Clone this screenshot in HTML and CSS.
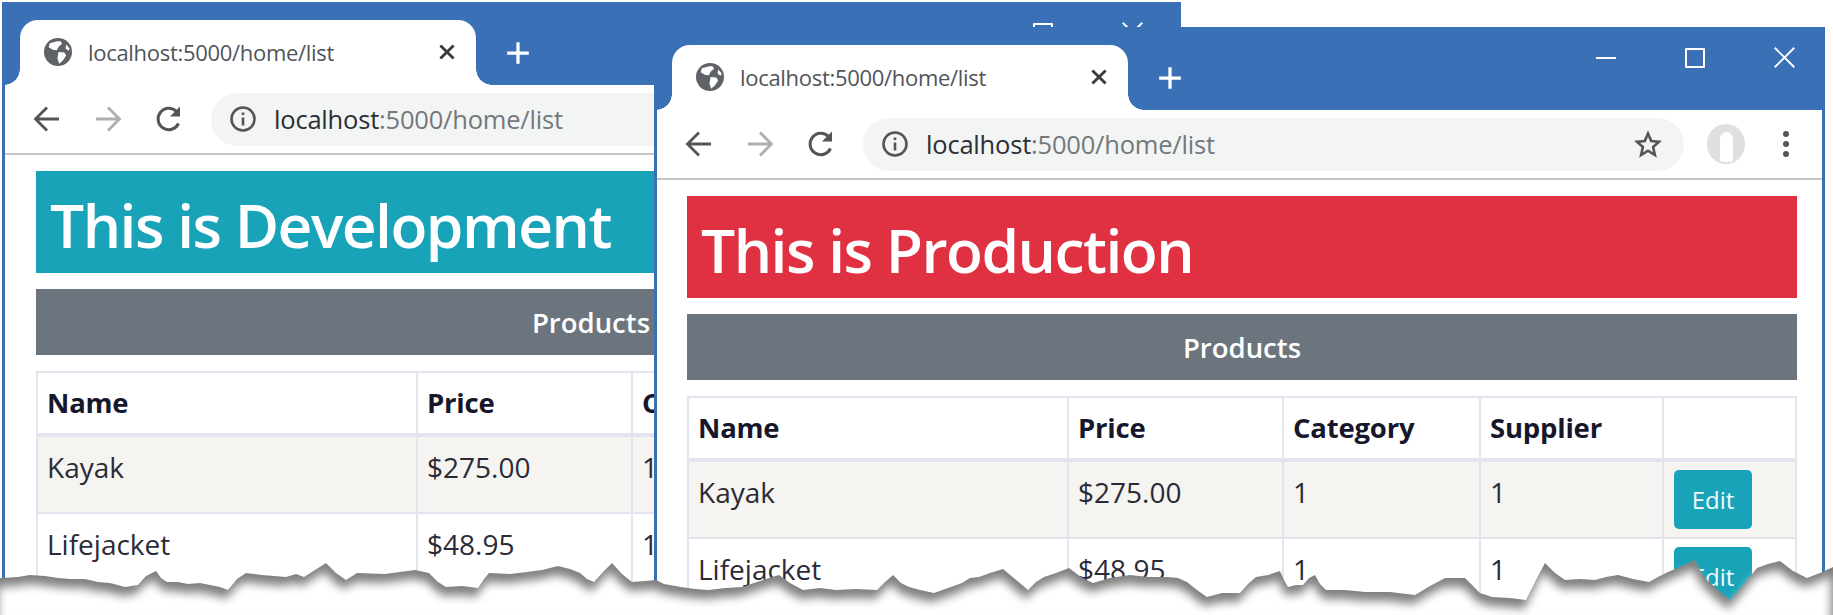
FILE: index.html
```html
<!DOCTYPE html>
<html lang="en">
  <head>
    <meta charset="UTF-8" />
    <title>This is Development / This is Production</title>
    <link rel="stylesheet" href="styles.css">
  </head>
  <body>
    <svg class="defs" width="0" height="0">
      <symbol id="i-globe" viewBox="0 0 24 24">
        <circle cx="12" cy="12" r="12" fill="#5f6368"/>
        <path d="M5 4.5 10.5 3 14 2.5 15.5 5 12.5 7.5 11 10.5 7.5 10 4 8Z M12.5 12 17.5 12.5 19 15 16 19.5 13 22 11.5 17.5Z M19 5.5 22 9 21 11 18.5 9Z" fill="#fff"/>
      </symbol>
      <symbol id="i-close" viewBox="0 0 20 20">
        <path d="M4 4 16 16M16 4 4 16" fill="none" stroke="#3b3b3b" stroke-width="2.6"/>
      </symbol>
      <symbol id="i-winclose" viewBox="0 0 20 20">
        <path d="M0.700 0.700 19.300 19.300M19.300 0.700 0.700 19.300" fill="none" stroke="#fff" stroke-width="1.800"/>
      </symbol>
      <symbol id="i-plus" viewBox="0 0 24 24">
        <path d="M12 2V22M2 12H22" fill="none" stroke="#fff" stroke-width="3"/>
      </symbol>
      <symbol id="i-arrow" viewBox="0 0 30 30">
        <path d="M27 15H4M15 3.5 3.5 15 15 26.500" fill="none" stroke="currentColor" stroke-width="2.8"/>
      </symbol>
      <symbol id="i-reload" viewBox="0 0 30 30">
        <path d="M24.500 19.500A10.700 10.700 0 1 1 22.500 7.500" fill="none" stroke="#555" stroke-width="3"/>
        <path d="M26 2.500V12.500H16Z" fill="#555"/>
      </symbol>
      <symbol id="i-info" viewBox="0 0 26 26">
        <circle cx="13" cy="13" r="11.500" fill="none" stroke="#555" stroke-width="2.600"/>
        <path d="M11.700 11.500H14.300V19.500H11.700ZM11.700 6.500H14.300V9.100H11.700Z" fill="#555"/>
      </symbol>
      <symbol id="i-star" viewBox="0 0 28 28">
        <path d="M14 3.500 17.200 11 25 11.700 19.100 17 20.900 25 14 20.700 7.100 25 8.900 17 3 11.700 10.800 11Z" fill="none" stroke="#555" stroke-width="2.600"/>
      </symbol>
    </svg>

    <div class="stage">
      <section class="window window-dev">
        <div class="titlebar">
          <div class="tab">
            <svg class="tab-globe"><use href="#i-globe"/></svg>
            <span class="tab-title">localhost:5000/home/list</span>
            <svg class="tab-close"><use href="#i-close"/></svg>
          </div>
          <svg class="new-tab"><use href="#i-plus"/></svg>
          <div class="win-controls">
            <span class="win-min"></span>
            <span class="win-max"></span>
            <svg class="win-close"><use href="#i-winclose"/></svg>
          </div>
        </div>
        <div class="toolbar">
          <svg class="nav-back"><use href="#i-arrow"/></svg>
          <svg class="nav-forward"><use href="#i-arrow"/></svg>
          <svg class="nav-reload"><use href="#i-reload"/></svg>
          <div class="omnibox">
            <svg class="omni-info"><use href="#i-info"/></svg>
            <span class="omni-url">localhost<span class="omni-rest">:5000/home/list</span></span>
            <svg class="omni-star"><use href="#i-star"/></svg>
          </div>
          <div class="avatar"><span class="avatar-inner"></span></div>
          <div class="menu-dots"><i></i><i></i><i></i></div>
        </div>
        <div class="content">
          <h1 class="banner banner-info">This is Development</h1>
          <div class="products-bar">Products</div>
          <table class="products">
            <colgroup>
              <col class="col-name"><col class="col-price"><col class="col-cat"><col class="col-sup"><col>
            </colgroup>
            <thead>
              <tr><th>Name</th><th>Price</th><th>Category</th><th>Supplier</th><th></th></tr>
            </thead>
            <tbody>
              <tr>
                <td>Kayak</td><td>$275.00</td><td>1</td><td>1</td>
                <td class="cell-btn"><button class="btn-edit">Edit</button></td>
              </tr>
              <tr>
                <td>Lifejacket</td><td>$48.95</td><td>1</td><td>1</td>
                <td class="cell-btn"><button class="btn-edit">Edit</button></td>
              </tr>
            </tbody>
          </table>
        </div>
      </section>

      <section class="window window-prod">
        <div class="titlebar">
          <div class="tab">
            <svg class="tab-globe"><use href="#i-globe"/></svg>
            <span class="tab-title">localhost:5000/home/list</span>
            <svg class="tab-close"><use href="#i-close"/></svg>
          </div>
          <svg class="new-tab"><use href="#i-plus"/></svg>
          <div class="win-controls">
            <span class="win-min"></span>
            <span class="win-max"></span>
            <svg class="win-close"><use href="#i-winclose"/></svg>
          </div>
        </div>
        <div class="toolbar">
          <svg class="nav-back"><use href="#i-arrow"/></svg>
          <svg class="nav-forward"><use href="#i-arrow"/></svg>
          <svg class="nav-reload"><use href="#i-reload"/></svg>
          <div class="omnibox">
            <svg class="omni-info"><use href="#i-info"/></svg>
            <span class="omni-url">localhost<span class="omni-rest">:5000/home/list</span></span>
            <svg class="omni-star"><use href="#i-star"/></svg>
          </div>
          <div class="avatar"><span class="avatar-inner"></span></div>
          <div class="menu-dots"><i></i><i></i><i></i></div>
        </div>
        <div class="content">
          <h1 class="banner banner-danger">This is Production</h1>
          <div class="products-bar">Products</div>
          <table class="products">
            <colgroup>
              <col class="col-name"><col class="col-price"><col class="col-cat"><col class="col-sup"><col>
            </colgroup>
            <thead>
              <tr><th>Name</th><th>Price</th><th>Category</th><th>Supplier</th><th></th></tr>
            </thead>
            <tbody>
              <tr>
                <td>Kayak</td><td>$275.00</td><td>1</td><td>1</td>
                <td class="cell-btn"><button class="btn-edit">Edit</button></td>
              </tr>
              <tr>
                <td>Lifejacket</td><td>$48.95</td><td>1</td><td>1</td>
                <td class="cell-btn"><button class="btn-edit">Edit</button></td>
              </tr>
            </tbody>
          </table>
        </div>
      </section>

      <!-- torn paper edge over the bottom of both windows -->
      <svg class="torn" viewBox="0 0 1833 615" width="1833" height="615">
        <defs>
          <path id="tear" d="M0 578 18 577 30 575 45 576 58 578 71 579 85 579 98 582 110 583 125 587 138 585 146 576 156 571 161 578 167 582 178 582 188 584 200 583 210 585 220 587 228 590 237 579 246 573 262 575 286 577 296 574 304 577 315 570 326 563 336 573 346 580 357 573 385 574 415 570 429 573 438 582 446 587 462 586 478 588 484 579 489 573 510 574 527 572 542 570 558 566 570 569 580 573 587 579 594 582 603 572 612 563 622 574 632 582 645 581 656 580 664 584 681 587 695 589 709 590 725 588 742 587 760 581 779 575 790 583 803 590 820 588 836 590 856 589 877 590 885 582 893 575 901 583 909 587 920 590 934 593 948 588 962 583 970 578 979 577 990 573 1003 569 1015 579 1028 590 1036 582 1044 577 1056 573 1069 568 1081 577 1093 583 1110 578 1130 575 1148 577 1167 577 1178 578 1187 582 1197 590 1207 597 1222 593 1240 593 1248 584 1256 577 1268 575 1280 571 1284 580 1288 587 1296 585 1303 585 1309 578 1315 575 1320 584 1326 590 1345 590 1365 592 1390 592 1415 595 1430 586 1445 578 1465 578 1473 586 1480 593 1492 597 1510 598 1526 600 1536 580 1545 563 1555 573 1565 580 1580 579 1595 580 1606 577 1618 575 1633 579 1649 582 1658 577 1668 572 1682 566 1695 560 1701 572 1707 580 1718 590 1730 600 1744 584 1757 568 1768 564 1780 561 1793 571 1807 578 1820 573 1833 567V615H0Z"/>
        </defs>
        <use href="#tear" class="tear-shadow"/>
        <use href="#tear" class="tear-fade"/>
      </svg>
    </div>
  </body>
</html>
```

FILE: styles.css
```css
html, body {
  margin: 0;
  padding: 0;
  background: #fff;
}

.defs {
  position: absolute;
}

.stage {
  position: relative;
  width: 1833px;
  height: 615px;
  overflow: hidden;
  background: #fff;
  font-family: "Open Sans", "Noto Sans", sans-serif;
  color: #2a2b36;
}

/* browser windows sit freely on the page */
.window {
  position: absolute;
  height: 640px;
  box-sizing: border-box;
  background: #fff;
  border: 3px solid #3a71b6;
  border-top-width: 0;
  overflow: hidden;
}

.window-dev {
  left: 2px;
  top: 2px;
  width: 1179px;
}

.window-prod {
  left: 654px;
  top: 27px;
  width: 1171px;
}

.titlebar {
  display: flex;
  align-items: flex-end;
  height: 83px;
  margin: 0 -3px;
  padding-left: 18px;
  background: #3a71b6;
}

.tab {
  position: relative;
  display: flex;
  align-items: center;
  box-sizing: border-box;
  width: 456px;
  height: 65px;
  padding: 0 18px 1px 24px;
  background: #fff;
  border-radius: 18px 18px 0 0;
}

.tab::before,
.tab::after {
  content: "";
  position: absolute;
  bottom: 0;
  width: 16px;
  height: 16px;
}

.tab::before {
  left: -16px;
  background: radial-gradient(circle at 0 0, transparent 15.5px, #fff 16px);
}

.tab::after {
  right: -16px;
  background: radial-gradient(circle at 100% 0, transparent 15.5px, #fff 16px);
}

.tab-globe {
  flex: none;
  width: 28px;
  height: 28px;
}

.tab-title {
  flex: 1;
  margin-left: 16px;
  font-size: 22px;
  letter-spacing: -0.3px;
  color: #50545a;
}

.tab-close {
  flex: none;
  width: 22px;
  height: 22px;
}

.new-tab {
  flex: none;
  width: 26px;
  height: 26px;
  margin: 0 0 19px 29px;
}

.win-controls {
  display: flex;
  align-items: center;
  gap: 69px;
  margin-left: auto;
  margin-right: 30px;
  align-self: flex-start;
  padding-top: 20px;
}

.window-dev .win-controls {
  margin-right: 38px;
}

.win-min {
  width: 20px;
  height: 2px;
  background: #fff;
}

.win-max {
  box-sizing: border-box;
  width: 20px;
  height: 20px;
  border: 2px solid #fff;
  border-radius: 1px;
}

.win-close {
  width: 21px;
  height: 21px;
}

.toolbar {
  display: flex;
  align-items: center;
  box-sizing: border-box;
  height: 70px;
  padding: 0 0 0 27px;
  border-bottom: 2px solid #c6c6c6;
}

.toolbar svg {
  flex: none;
}

.nav-back,
.nav-forward,
.nav-reload {
  width: 30px;
  height: 30px;
  margin-right: 31px;
}

.nav-back {
  color: #555;
}

.nav-forward {
  color: #aeaeae;
  transform: scaleX(-1);
}

.nav-reload {
  margin-right: 27px;
}

.omnibox {
  display: flex;
  align-items: center;
  box-sizing: border-box;
  width: 821px;
  height: 53px;
  padding: 0 22px 0 19px;
  background: #f3f5f4;
  border-radius: 27px;
}

.omni-info {
  width: 26px;
  height: 26px;
}

.omni-url {
  flex: 1;
  margin-left: 18px;
  font-size: 25.500px;
  letter-spacing: -0.2px;
  color: #2b2e33;
}

.omni-rest {
  color: #74787c;
}

.omni-star {
  width: 28px;
  height: 28px;
}

.avatar {
  display: flex;
  justify-content: center;
  align-items: center;
  flex: none;
  width: 38px;
  height: 40px;
  margin-left: 23px;
  background: #dfdfdf;
  border-radius: 50%;
}

.avatar-inner {
  width: 13px;
  height: 30px;
  margin-top: 6px;
  background: #fff;
  border-radius: 7px 7px 3px 3px;
}

.menu-dots {
  display: flex;
  flex-direction: column;
  gap: 4px;
  flex: none;
  margin-left: 38px;
}

.menu-dots i {
  width: 6px;
  height: 6px;
  background: #555;
  border-radius: 50%;
}

.content {
  width: 1110px;
  padding: 16px 0 0 30px;
}

.window-dev .content {
  padding-left: 31px;
}

.banner {
  display: flex;
  align-items: center;
  box-sizing: border-box;
  height: 102px;
  margin: 0 0 16px;
  padding: 4px 0 0 14px;
  font-size: 60.500px;
  font-weight: 600;
  letter-spacing: -1.500px;
  color: #fff;
}

.banner-info {
  background: #19a3b9;
}

.banner-danger {
  background: #e03143;
}

.products-bar {
  height: 66px;
  margin-bottom: 16px;
  background: #6c757d;
  color: #fff;
  font-size: 27.500px;
  font-weight: 600;
  line-height: 68px;
  text-align: center;
}

.products {
  width: 1110px;
  table-layout: fixed;
  border-collapse: collapse;
  font-size: 28px;
}

.col-name {
  width: 380px;
}

.col-price {
  width: 215px;
}

.col-cat {
  width: 197px;
}

.col-sup {
  width: 183px;
}

.products th,
.products td {
  padding: 12px 9px 10px;
  border: 2px solid #e3e5ee;
  text-align: left;
  vertical-align: top;
  line-height: 36px;
  white-space: nowrap;
}

.products th {
  height: 38px;
  border-bottom-width: 4px;
  font-weight: 700;
  font-size: 27.500px;
  letter-spacing: -0.2px;
  color: #16172a;
  background: #fff;
}

.products tbody tr:nth-child(odd) td {
  background: #f5f4f0;
}

.products .cell-btn {
  padding: 8px 10px;
}

.btn-edit {
  display: block;
  width: 78px;
  height: 59px;
  padding: 0;
  border: none;
  border-radius: 5px;
  background: #19a3b9;
  color: #f2fafb;
  font-family: inherit;
  font-size: 24px;
}

.torn {
  position: absolute;
  left: 0;
  top: 0;
}

.tear-shadow {
  fill: #808080;
}

.tear-fade {
  fill: #fff;
  transform: translate(-2px, 9px);
  filter: blur(5px);
}
```
